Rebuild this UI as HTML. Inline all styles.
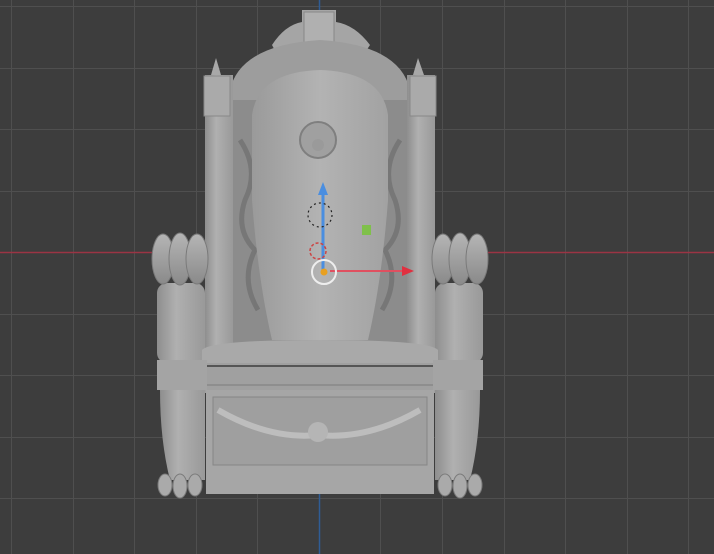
<!DOCTYPE html>
<html><head><meta charset="utf-8"><style>
html,body{margin:0;padding:0;background:#3d3d3d;width:714px;height:554px;overflow:hidden}
</style></head><body>
<svg width="714" height="554" viewBox="0 0 714 554" xmlns="http://www.w3.org/2000/svg">
<defs>
<linearGradient id="g" x1="0" x2="1"><stop offset="0" stop-color="#8e8e8e"/><stop offset=".4" stop-color="#b0b0b0"/><stop offset="1" stop-color="#999"/></linearGradient>
<linearGradient id="back" x1="0" x2="1"><stop offset="0" stop-color="#9a9a9a"/><stop offset=".5" stop-color="#b3b3b3"/><stop offset="1" stop-color="#a2a2a2"/></linearGradient>
<linearGradient id="roll" x1="0" x2="0" y1="0" y2="1"><stop offset="0" stop-color="#b5b5b5"/><stop offset="1" stop-color="#8a8a8a"/></linearGradient>
</defs>
<rect width="714" height="554" fill="#3d3d3d"/>
<g stroke="#4f4f4f" stroke-width="1">
<path d="M11.5 0V554M73.5 0V554M134.5 0V554M196.5 0V554M257.5 0V554M380.5 0V554M442.5 0V554M504.5 0V554M565.5 0V554M627.5 0V554M688.5 0V554"/>
<path d="M0 6.5H714M0 68.5H714M0 129.5H714M0 191.5H714M0 314.5H714M0 375.5H714M0 437.5H714M0 498.5H714"/>
</g>
<line x1="0" y1="252.5" x2="714" y2="252.5" stroke="#9b3444" stroke-width="1.5"/>
<line x1="319.5" y1="0" x2="319.5" y2="554" stroke="#2f5d95" stroke-width="1.5"/>

<!-- crest -->
<path d="M272 45 Q285 25 302 22 L302 10 L336 10 L336 22 Q355 25 370 45 L360 60 L280 60Z" fill="#a5a5a5"/>
<rect x="304" y="12" width="30" height="40" fill="#b0b0b0" stroke="#888"/>
<!-- arch -->
<path d="M230 125 L230 90 Q240 45 320 40 Q400 45 410 90 L410 125Z" fill="#9d9d9d"/>
<!-- back ornate panel -->
<rect x="230" y="100" width="180" height="245" fill="#8c8c8c"/>
<g stroke="#6e6e6e" stroke-width="5" fill="none" opacity=".7">
<path d="M240 140 Q260 170 245 200 Q235 230 255 250 Q240 280 258 310"/>
<path d="M400 140 Q380 170 395 200 Q405 230 385 250 Q400 280 382 310"/>
</g>
<!-- cushion -->
<path d="M272 340 Q258 280 252 200 L252 115 Q258 72 320 70 Q382 72 388 115 L388 200 Q382 280 368 340Z" fill="url(#back)"/>
<path d="M300 140 a18 18 0 1 0 36 0 a18 18 0 1 0 -36 0" fill="#a0a0a0" stroke="#7f7f7f" stroke-width="2"/>
<circle cx="318" cy="145" r="6" fill="#9a9a9a"/>
<!-- posts -->
<rect x="205" y="75" width="28" height="290" fill="url(#g)"/>
<rect x="407" y="75" width="28" height="290" fill="url(#g)"/>
<path d="M211 75 L216 58 L221 75Z M413 75 L418 58 L424 75Z" fill="#a8a8a8"/>
<rect x="204" y="76" width="26" height="40" fill="#aaa" stroke="#888"/>
<rect x="410" y="76" width="26" height="40" fill="#aaa" stroke="#888"/>
<!-- armrest supports -->
<rect x="157" y="283" width="48" height="80" rx="10" fill="url(#g)"/>
<rect x="435" y="283" width="48" height="80" rx="10" fill="url(#g)"/>
<!-- rolls -->
<g fill="url(#roll)" stroke="#7a7a7a">
<ellipse cx="163" cy="259" rx="11" ry="25"/><ellipse cx="180" cy="259" rx="11" ry="26"/><ellipse cx="197" cy="259" rx="11" ry="25"/>
<ellipse cx="443" cy="259" rx="11" ry="25"/><ellipse cx="460" cy="259" rx="11" ry="26"/><ellipse cx="477" cy="259" rx="11" ry="25"/>
</g>
<!-- seat -->
<path d="M202 350 Q210 340 320 340 Q430 340 438 350 L438 365 L202 365Z" fill="#a9a9a9"/>
<rect x="205" y="363" width="230" height="30" fill="#a0a0a0"/>
<line x1="205" y1="366" x2="435" y2="366" stroke="#555" stroke-width="2"/>
<line x1="205" y1="385" x2="435" y2="385" stroke="#7d7d7d"/>
<!-- base -->
<rect x="206" y="390" width="228" height="104" fill="#a6a6a6"/>
<rect x="213" y="397" width="214" height="68" fill="#9f9f9f" stroke="#858585"/>
<path d="M218 410 Q270 440 318 435 Q368 440 420 410" stroke="#bdbdbd" stroke-width="6" fill="none"/>
<circle cx="318" cy="432" r="10" fill="#b5b5b5"/>
<!-- legs -->
<rect x="157" y="360" width="50" height="30" fill="#a4a4a4"/>
<rect x="433" y="360" width="50" height="30" fill="#a4a4a4"/>
<path d="M160 390 L205 390 L205 480 L170 480 Q160 440 160 390Z" fill="url(#g)"/>
<path d="M435 390 L480 390 Q480 440 470 480 L435 480Z" fill="url(#g)"/>
<g fill="#aaa" stroke="#7a7a7a"><ellipse cx="165" cy="485" rx="7" ry="11"/><ellipse cx="180" cy="486" rx="7" ry="12"/><ellipse cx="195" cy="485" rx="7" ry="11"/>
<ellipse cx="445" cy="485" rx="7" ry="11"/><ellipse cx="460" cy="486" rx="7" ry="12"/><ellipse cx="475" cy="485" rx="7" ry="11"/></g>
<!-- gizmo -->
<line x1="323" y1="270" x2="323" y2="192" stroke="#4a8ee0" stroke-width="3"/>
<path d="M318 195 L323 182 L328 195Z" fill="#4a8ee0"/>
<line x1="330" y1="271" x2="405" y2="271" stroke="#e05060" stroke-width="2"/>
<path d="M402 266 L414 271 L402 276Z" fill="#e03040"/>
<circle cx="324" cy="272" r="12" fill="none" stroke="#eee" stroke-width="2"/>
<circle cx="324" cy="272" r="3.5" fill="#e8a020"/>
<circle cx="318" cy="251" r="8" fill="none" stroke="#c44" stroke-width="1.5" stroke-dasharray="3 2"/>
<rect x="362" y="225" width="9" height="10" fill="#7fc04a"/>
<circle cx="320" cy="215" r="12" fill="none" stroke="#222" stroke-width="1.2" stroke-dasharray="2 3"/>
</svg>
</body></html>
